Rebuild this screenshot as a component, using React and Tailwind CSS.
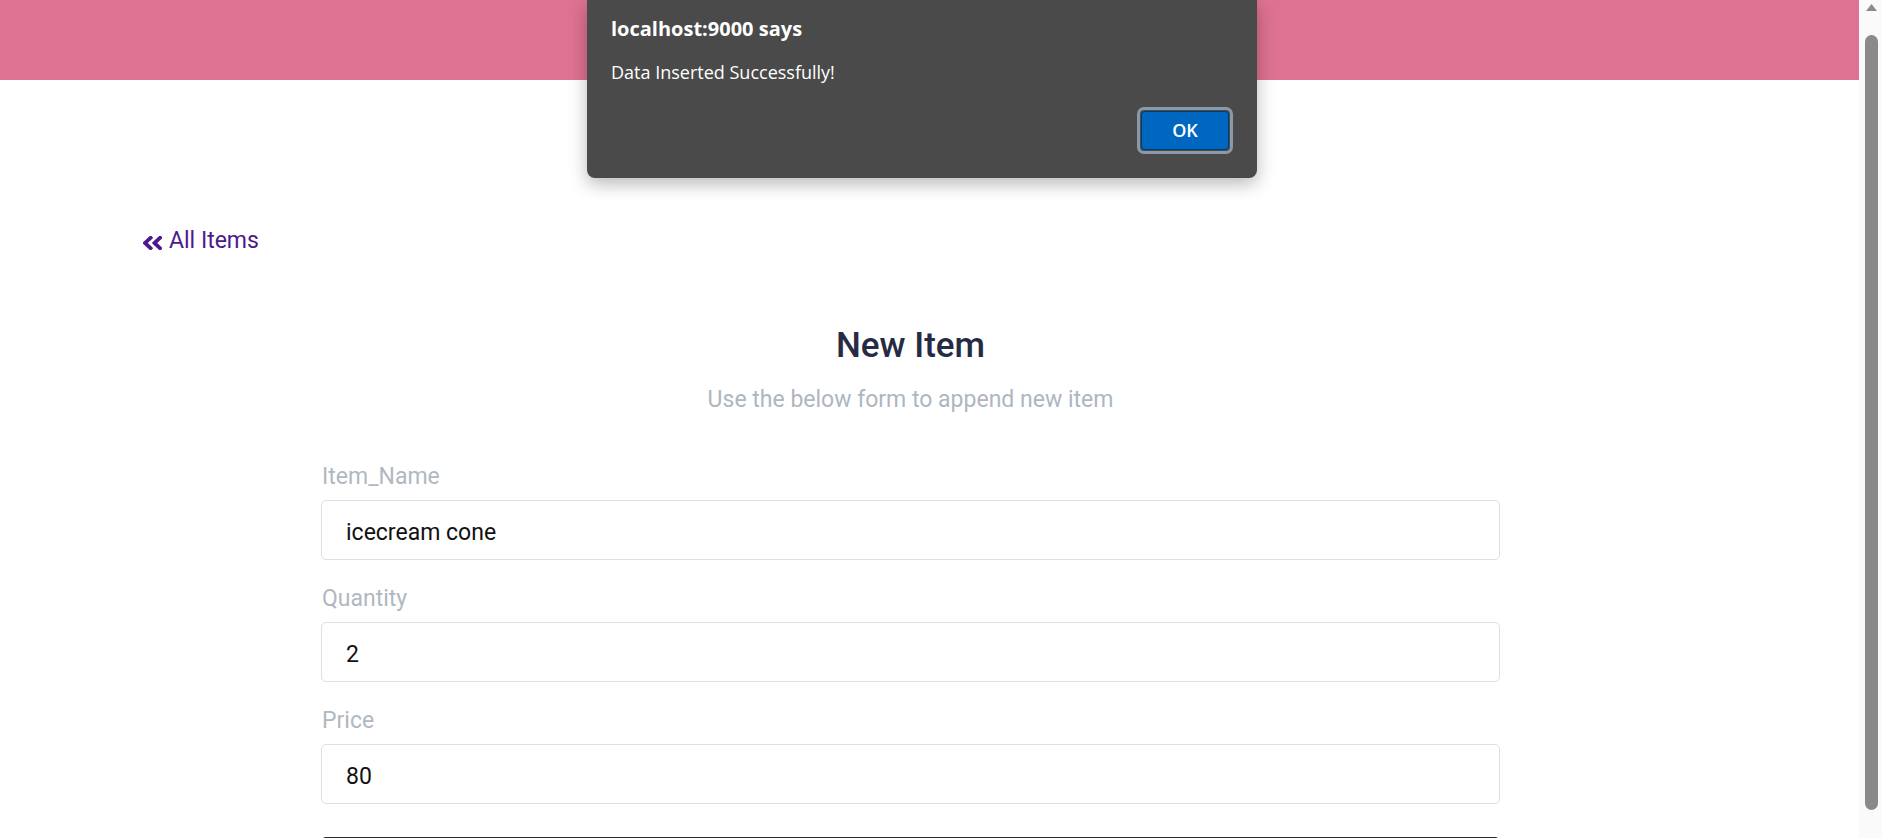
import React, { useState } from 'react';

const fields = [
  { label: 'Item_Name', value: 'icecream cone' },
  { label: 'Quantity', value: '2' },
  { label: 'Price', value: '80' },
];

// angle-double-left, cropped to its glyph box
const ChevronsLeft = () => (
  <svg width="19" height="14" viewBox="31 103 385 306" preserveAspectRatio="none" fill="currentColor">
    <path d="M223.7 239l136-136c9.4-9.4 24.6-9.4 33.9 0l22.6 22.6c9.4 9.4 9.4 24.6 0 33.9L319.9 256l96.4 96.4c9.4 9.4 9.4 24.6 0 33.9L393.7 409c-9.4 9.4-24.6 9.4-33.9 0l-136-136c-9.5-9.4-9.5-24.6-.1-34zm-192 34l136 136c9.4 9.4 24.6 9.4 33.9 0l22.6-22.6c9.4-9.4 9.4-24.6 0-33.9L127.9 256l96.4-96.4c9.4-9.4 9.4-24.6 0-33.9L201.7 103c-9.4-9.4-24.6-9.4-33.9 0l-136 136c-9.5 9.4-9.5 24.6-.1 34z" />
  </svg>
);

const AlertDialog = () => (
  <div className="absolute left-[587px] top-0 w-[670px] h-[178px] bg-[#4a4a4a] rounded-b-[8px] shadow-[0_6px_18px_rgba(0,0,0,0.28)] px-[24px] pt-[15px] font-['Open_Sans',sans-serif] text-white flex flex-col">
    <div className="text-[20px] leading-[28px] font-bold">localhost:9000 says</div>
    <div className="mt-[17px] text-[18px] leading-[24px]">Data Inserted Successfully!</div>
    <div className="mt-[23px] flex justify-end">
      <div className="rounded-[7px] border-[3px] border-[#8b98a8] p-px">
        <button
          type="button"
          className="w-[88px] h-[39px] rounded-[4px] bg-[#0067c0] border border-[#003e73] text-[18px] font-semibold text-white"
        >
          OK
        </button>
      </div>
    </div>
  </div>
);

const FakeScrollbar = () => (
  <div className="w-[23px] shrink-0 h-full bg-[#fafafa] flex flex-col items-center">
    <svg width="11" height="7" viewBox="0 0 11 7" className="mt-[4px] ml-[1px]">
      <path d="M5.5 0L11 7H0z" fill="#8a8a8a" />
    </svg>
    <div className="mt-[24px] ml-[1px] w-[13px] h-[775px] rounded-full bg-[#8a8a8a]" />
  </div>
);

export default function App() {
  const [values, setValues] = useState(fields.map((f) => f.value));

  const handleChange = (i) => (e) => {
    const next = [...values];
    next[i] = e.target.value;
    setValues(next);
  };

  return (
    <div className="relative flex h-[838px] w-full overflow-hidden bg-white font-['Roboto',sans-serif]">
      <div className="flex-1 min-w-0">
        {/* top bar */}
        <div className="h-[80px] bg-[#de7292]" />

        {/* back link */}
        <div className="pl-[143px] pt-[144px]">
          <a href="#" className="flex items-center gap-[7px] h-[34px] text-[23px] leading-[34px] text-[#4c1a8c] w-fit">
            <span className="pt-[4px]">
              <ChevronsLeft />
            </span>
            All Items
          </a>
        </div>

        {/* form */}
        <div className="ml-[321px] w-[1179px] mt-[66px]">
          <h1 className="text-center text-[35px] leading-[44px] font-medium text-[#252b42]">New Item</h1>
          <p className="mt-[16px] text-center text-[23px] leading-[32px] text-[#aeb6bf]">
            Use the below form to append new item
          </p>

          <form className="mt-[45px] flex flex-col gap-[23px]" onSubmit={(e) => e.preventDefault()}>
            {fields.map((f, i) => (
              <div key={f.label} className="flex flex-col">
                <label className="text-[23px] leading-[32px] text-[#b0b8c1] mb-[7px] pl-px">{f.label}</label>
                <input
                  value={values[i]}
                  onChange={handleChange(i)}
                  className="h-[60px] w-full rounded-[5px] border border-[#dcdfe4] px-[24px] pt-[4px] text-[23px] text-[#111111] focus:outline-none"
                />
              </div>
            ))}
            <button type="submit" aria-label="Submit" className="mt-[10px] h-[58px] w-full rounded-[5px] bg-[#282834]" />
          </form>
        </div>
      </div>

      <FakeScrollbar />
      <AlertDialog />
    </div>
  );
}
